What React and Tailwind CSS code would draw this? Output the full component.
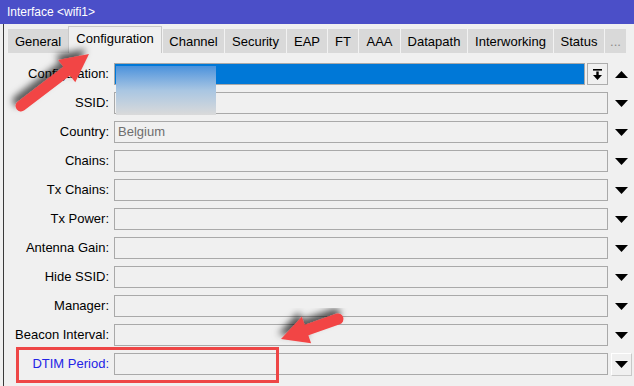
import React from 'react';

const tabs = [
  { label: 'General', w: 'w-[61px]' },
  { label: 'Configuration', w: 'w-[94px]', active: true },
  { label: 'Channel', w: 'w-[62px]' },
  { label: 'Security', w: 'w-[62px]' },
  { label: 'EAP', w: 'w-[41px]' },
  { label: 'FT', w: 'w-[31px]' },
  { label: 'AAA', w: 'w-[42px]' },
  { label: 'Datapath', w: 'w-[67px]' },
  { label: 'Interworking', w: 'w-[86px]' },
  { label: 'Status', w: 'w-[51px]' },
  { label: '...', w: 'w-[22px]', muted: true },
];

const rows = [
  { label: 'SSID:' },
  { label: 'Country:', value: 'Belgium' },
  { label: 'Chains:' },
  { label: 'Tx Chains:' },
  { label: 'Tx Power:' },
  { label: 'Antenna Gain:' },
  { label: 'Hide SSID:' },
  { label: 'Manager:' },
  { label: 'Beacon Interval:' },
];

const Down = () => (
  <svg width="13" height="7" viewBox="0 0 13 7">
    <polygon points="0,0 13,0 6.5,7" fill="#000" />
  </svg>
);

const Up = () => (
  <svg width="13" height="7" viewBox="0 0 13 7">
    <polygon points="0,7 13,7 6.5,0" fill="#000" />
  </svg>
);

// red callout arrow, shaft from tail to the base of the head
const Arrow = ({ tail, tip, sw = 5, hl = 26, hw = 13 }) => {
  const dx = tip[0] - tail[0];
  const dy = tip[1] - tail[1];
  const len = Math.hypot(dx, dy);
  const ux = dx / len;
  const uy = dy / len;
  const nx = -uy;
  const ny = ux;
  const bx = tip[0] - ux * hl;
  const by = tip[1] - uy * hl;
  const head = `${bx + nx * hw},${by + ny * hw} ${tip[0]},${tip[1]} ${bx - nx * hw},${by - ny * hw}`;
  return (
    <g filter="url(#shadow)">
      <line x1={tail[0]} y1={tail[1]} x2={bx + ux * 2} y2={by + uy * 2} stroke="#f24545" strokeWidth={sw * 2} strokeLinecap="round" />
      <polygon points={head} fill="#f24545" />
    </g>
  );
};

export default function App() {
  return (
    <div className="relative w-[634px] h-[386px] overflow-hidden bg-[#f0f0f0] font-['Liberation_Sans',Arial,sans-serif] text-[13px] text-black">
      <div className="h-[24px] bg-[#4b4fc8] text-white text-[12px] pl-[7px] flex items-center">
        Interface &lt;wifi1&gt;
      </div>

      <div className="ml-[3px] h-[362px] border-l border-[#3a3a3a]">
        <div className="h-[29px] pl-[3px] flex items-end">
          {tabs.map((t) =>
            t.active ? (
              <div
                key={t.label}
                className={`${t.w} h-[27px] bg-[#f0f0f0] border-t border-l border-r border-[#c9c9c9] flex items-center justify-center pb-[2px]`}
              >
                {t.label}
              </div>
            ) : (
              <div
                key={t.label}
                className={`${t.w} h-[24px] bg-[#d9d9d9] border-l border-[#f2f2f2] flex items-center justify-center pt-[1px] ${t.muted ? 'text-[#8a8a8a]' : ''}`}
              >
                {t.label}
              </div>
            )
          )}
        </div>

        <div className="pt-[10px] flex flex-col gap-[7px]">
          <div className="h-[22px] flex items-center">
            <div className="w-[105px] text-right">Configuration:</div>
            <div className="ml-[5px] flex-1 h-full bg-[#0078d7] border border-[#a9a9a9]" />
            <div className="ml-[2px] w-[21px] h-full border border-[#adadad] flex items-center justify-center">
              <svg width="9" height="11" viewBox="0 0 9 11">
                <rect x="0" y="0" width="9" height="1.6" fill="#000" />
                <rect x="3.3" y="2.5" width="2.4" height="4" fill="#000" />
                <polygon points="0,6 9,6 4.5,11" fill="#000" />
              </svg>
            </div>
            <div className="w-[26px] flex items-center justify-center pl-[1px]">
              <Up />
            </div>
          </div>

          {rows.map((r) => (
            <div key={r.label} className="h-[22px] flex items-center">
              <div className="w-[105px] text-right">{r.label}</div>
              <div className="ml-[5px] flex-1 h-full border border-[#a9a9a9] flex items-center pl-[3px] text-[#6e6e6e]">
                {r.value}
              </div>
              <div className="w-[26px] flex items-center justify-center pl-[1px]">
                <Down />
              </div>
            </div>
          ))}

          <div className="h-[22px] flex items-center">
            <div className="w-[105px] text-right text-[#2323e6]">DTIM Period:</div>
            <div className="ml-[5px] flex-1 h-full border border-[#a9a9a9]" />
            <div className="ml-[3px] w-[21px] h-[23px] border-t border-l border-white border-r border-b border-r-[#c8c8c8] border-b-[#c8c8c8] flex items-center justify-center">
              <Down />
            </div>
            <div className="w-[2px]" />
          </div>
        </div>
      </div>

      {/* blurred-out value */}
      <div className="absolute left-[116px] top-[66px] w-[100px] h-[49px] bg-gradient-to-b from-[#4a92dc] via-[#a9c6e2] to-[#dadada]" />

      <div className="absolute left-[16px] top-[347px] w-[263px] h-[36px] border-[3px] border-[#ee4646]" />

      <svg className="absolute left-0 top-0" width="634" height="386" viewBox="0 0 634 386">
        <defs>
          <filter id="shadow" x="-30%" y="-30%" width="160%" height="160%">
            <feDropShadow dx="-3" dy="-5" stdDeviation="3.5" floodColor="#000" floodOpacity="0.65" />
          </filter>
        </defs>
        <Arrow tail={[21, 106]} tip={[89, 54]} sw={5.5} hl={28} hw={14} />
        <Arrow tail={[338, 319]} tip={[281, 339]} sw={5.5} hl={27} hw={14} />
      </svg>
    </div>
  );
}
